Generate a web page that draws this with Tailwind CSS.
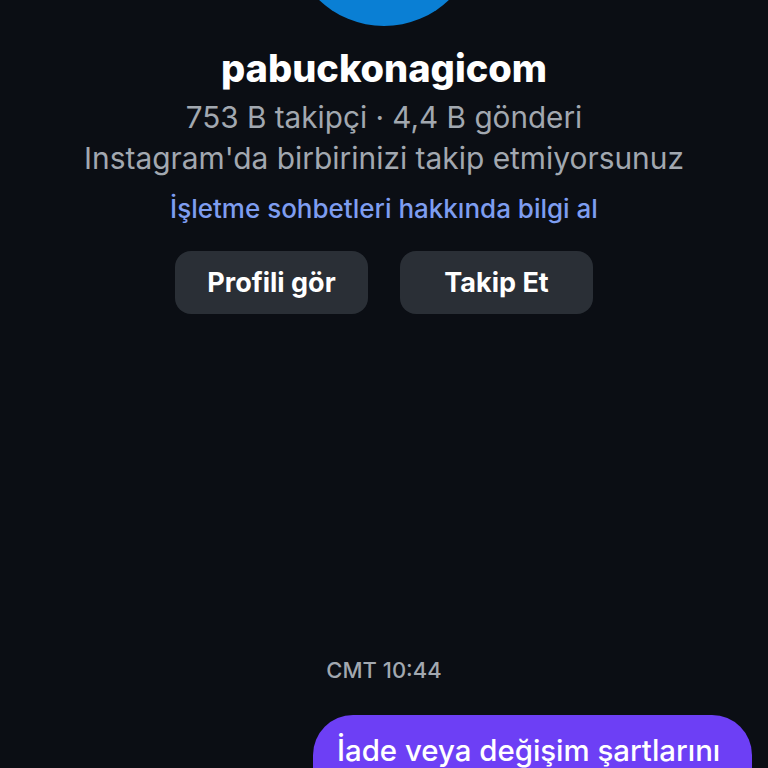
<!DOCTYPE html>
<html lang="tr">
<head>
    <meta charset="UTF-8">
    <meta name="viewport" content="width=device-width, initial-scale=1.0">
    <title>pabuckonagicom</title>
    <script src="https://cdn.jsdelivr.net/npm/@tailwindcss/browser@4"></script>
</head>
<body class="bg-[#0b0e14] font-['Inter',sans-serif]">
    <main class="relative h-[768px] w-[768px] overflow-hidden flex flex-col items-center">
        <!-- Avatar, cut off by the top edge -->
        <div class="mt-[-162px] h-[188px] w-[188px] shrink-0 rounded-full bg-[#0a7fd4]"></div>

        <h1 class="mt-[19px] text-[38px] leading-[46px] font-extrabold text-white">pabuckonagicom</h1>
        <p class="mt-[6px] text-[29.7px] leading-[40px] text-[#a2a8b0]">753 B takipçi · 4,4 B gönderi</p>
        <p class="text-[29.9px] leading-[42px] text-[#a2a8b0]">Instagram'da birbirinizi takip etmiyorsunuz</p>
        <a class="mt-[12px] text-[26px] leading-[36px] font-medium text-[#7e9df0]">İşletme sohbetleri hakkında bilgi al</a>

        <!-- Actions -->
        <div class="mt-[24px] flex gap-[32px]">
            <button class="h-[63px] w-[193px] rounded-[16px] bg-[#2a2f36] pt-[2px] text-[27px] font-bold text-white">Profili gör</button>
            <button class="h-[63px] w-[193px] rounded-[16px] bg-[#2a2f36] pt-[2px] text-[27px] font-bold text-white">Takip Et</button>
        </div>

        <p class="mt-[341px] text-[22px] leading-[30px] font-medium text-[#a2a8b0]">CMT 10:44</p>

        <!-- Outgoing message -->
        <div class="mt-[30px] mr-[16px] self-end w-[439px] rounded-t-[40px] bg-[#6d3ff5] pl-[24px] pt-[16px] text-[29.4px] leading-[40px] font-medium text-white">İade veya değişim şartlarını</div>
    </main>
</body>
</html>
